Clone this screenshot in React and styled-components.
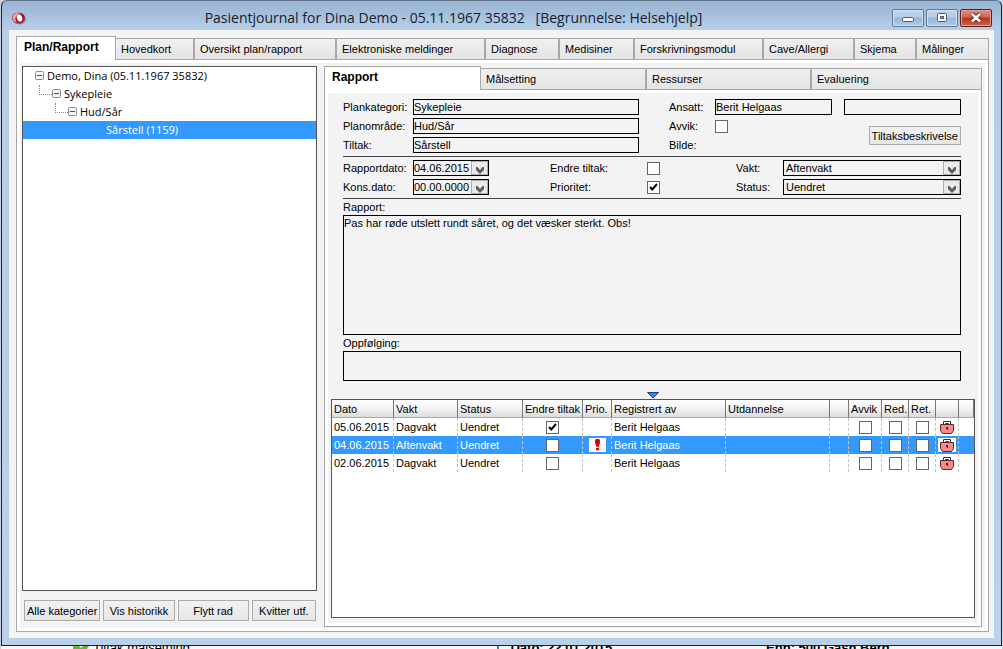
import React, { useState } from "react";
import styled, { createGlobalStyle, css } from "styled-components";

const mainTabs = [
  "Plan/Rapport",
  "Hovedkort",
  "Oversikt plan/rapport",
  "Elektroniske meldinger",
  "Diagnose",
  "Medisiner",
  "Forskrivningsmodul",
  "Cave/Allergi",
  "Skjema",
  "Målinger",
];

const subTabs = ["Rapport", "Målsetting", "Ressurser", "Evaluering"];

const reports = [
  { id: 1, date: "05.06.2015", shift: "Dagvakt", status: "Uendret", changed: true, prio: false, by: "Berit Helgaas" },
  { id: 2, date: "04.06.2015", shift: "Aftenvakt", status: "Uendret", changed: false, prio: true, by: "Berit Helgaas" },
  { id: 3, date: "02.06.2015", shift: "Dagvakt", status: "Uendret", changed: false, prio: false, by: "Berit Helgaas" },
];

const columns = [
  { id: "date", title: "Dato", width: 62 },
  { id: "shift", title: "Vakt", width: 64 },
  { id: "status", title: "Status", width: 65 },
  { id: "changed", title: "Endre tiltak", width: 60 },
  { id: "prio", title: "Prio.", width: 29 },
  { id: "by", title: "Registrert av", width: 114 },
  { id: "education", title: "Utdannelse", width: 104 },
  { id: "blank", title: "", width: 19 },
  { id: "avvik", title: "Avvik", width: 33 },
  { id: "red", title: "Red.", width: 27 },
  { id: "ret", title: "Ret.", width: 27 },
  { id: "lock", title: "", width: 23 },
  { id: "end", title: "", width: 15 },
];

const AppLogo = () => (
  <svg width="16" height="16" viewBox="0 0 16 16" aria-hidden="true">
    <ellipse cx="8.5" cy="9.5" rx="6.5" ry="5" fill="#8d8f9c" />
    <ellipse cx="7.5" cy="8" rx="6.5" ry="5.5" fill="#a8142a" />
    <path d="M1.5 8C1.5 4 6 2 10 3C7 3.5 5 5 4.5 8C4.3 10 5 12 6.5 13C3.5 12.5 1.5 10.5 1.5 8Z" fill="#dba9b0" />
    <ellipse cx="8.5" cy="8" rx="2.6" ry="3.8" fill="#fff" transform="rotate(-20 8.5 8)" />
  </svg>
);

const Expander = () => (
  <svg width="9" height="9" viewBox="0 0 9 9" aria-hidden="true">
    <rect x="0.5" y="0.5" width="8" height="8" rx="1" fill="#f4f4f4" stroke="#8c8c8c" />
    <path d="M2 4.5H7" stroke="#3d4f8c" />
  </svg>
);

const Chevron = () => (
  <svg width="8" height="7" viewBox="0 0 8 7" aria-hidden="true">
    <path d="M0 0H1.5L4 3L6.5 0H8V3L4 7L0 3Z" fill="#5c5c5c" />
  </svg>
);

const Tick = () => (
  <svg width="9" height="8" viewBox="0 0 9 8" aria-hidden="true">
    <path d="M1 4L3.3 6.5L8 1" fill="none" stroke="#000" strokeWidth="2" />
  </svg>
);

const Lock = () => (
  <svg width="18" height="14" viewBox="0 0 18 14" aria-hidden="true">
    <path d="M5.5 4V1.5H12.5V4" fill="none" stroke="#3c3030" />
    <path d="M7.5 4V3.5H10.5V4" fill="none" stroke="#3c3030" />
    <path d="M2.5 4.5H15.5V10.5L13.5 13.5H4.5L2.5 10.5Z" fill="#f48a8a" stroke="#5a2a2c" />
    <path d="M8 7H10V10H9V9H8Z" fill="#7c1018" />
  </svg>
);

const Important = () => (
  <svg width="17" height="14" viewBox="0 0 17 14" role="img" aria-label="Prioritet">
    <rect width="17" height="14" fill="#fff" />
    <path d="M7 1H10L11 2V5L9.5 9H7.5L6 5V2Z" fill="#e8000c" />
    <path d="M7 10H10V11.5L9.5 12.5H7.5L7 11.5Z" fill="#e8000c" />
  </svg>
);

const CheckBox = ({ label, ...rest }) => (
  <CheckWrap>
    <input type="checkbox" aria-label={label} {...rest} />
    <Tick />
  </CheckWrap>
);

const DropDown = ({ id, options, date }) => (
  <DropWrap $date={date}>
    <select id={id}>
      {options.map((option) => (
        <option key={option}>{option}</option>
      ))}
    </select>
    <span>
      <Chevron />
    </span>
  </DropWrap>
);

const ReportTable = () => {
  const [selected, setSelected] = useState(2);

  return (
    <TableBox>
      <Table>
        <colgroup>
          {columns.map((col) => (
            <col key={col.id} style={{ width: col.width }} />
          ))}
        </colgroup>
        <thead>
          <tr>
            {columns.map((col) => (
              <th key={col.id}>{col.title}</th>
            ))}
          </tr>
        </thead>
        <tbody>
          {reports.map((report) => {
            const { id, date, shift, status, changed, prio, by } = report;
            return (
              <Row key={id} $selected={selected === id} onClick={() => setSelected(id)}>
                <td>{date}</td>
                <td>{shift}</td>
                <td>{status}</td>
                <IconCell>
                  <CheckBox label="Endre tiltak" defaultChecked={changed} />
                </IconCell>
                <IconCell>{prio && <Important />}</IconCell>
                <td>{by}</td>
                <td></td>
                <td></td>
                <IconCell>
                  <CheckBox label="Avvik" />
                </IconCell>
                <IconCell>
                  <CheckBox label="Red." />
                </IconCell>
                <IconCell>
                  <CheckBox label="Ret." />
                </IconCell>
                <IconCell>
                  <LockBox>
                    <Lock />
                  </LockBox>
                </IconCell>
                <td></td>
              </Row>
            );
          })}
        </tbody>
      </Table>
    </TableBox>
  );
};

const ReportForm = () => (
  <Form>
    <TopFields>
      <FieldGrid $cols="70px 1fr">
        <label htmlFor="kategori">Plankategori:</label>
        <Input id="kategori" defaultValue="Sykepleie" />
        <label htmlFor="omrade">Planområde:</label>
        <Input id="omrade" defaultValue="Hud/Sår" />
        <label htmlFor="tiltak">Tiltak:</label>
        <Input id="tiltak" defaultValue="Sårstell" />
      </FieldGrid>
      <FieldGrid $cols="46px 1fr auto">
        <label htmlFor="ansatt">Ansatt:</label>
        <Pair>
          <Input id="ansatt" defaultValue="Berit Helgaas" />
          <Input aria-label="Ansatt 2" />
        </Pair>
        <label htmlFor="avvik">Avvik:</label>
        <CheckBox id="avvik" />
        <DescriptionButton type="button">Tiltaksbeskrivelse</DescriptionButton>
        <span>Bilde:</span>
      </FieldGrid>
    </TopFields>
    <MiddleFields>
      <FieldGrid $cols="70px 76px">
        <label htmlFor="rapportdato">Rapportdato:</label>
        <DropDown id="rapportdato" date options={["04.06.2015"]} />
        <label htmlFor="konsdato">Kons.dato:</label>
        <DropDown id="konsdato" date options={["00.00.0000"]} />
      </FieldGrid>
      <FieldGrid $cols="97px 13px">
        <label htmlFor="endre">Endre tiltak:</label>
        <CheckBox id="endre" />
        <label htmlFor="prioritet">Prioritet:</label>
        <CheckBox id="prioritet" defaultChecked />
      </FieldGrid>
      <FieldGrid $cols="47px 1fr">
        <label htmlFor="vakt">Vakt:</label>
        <DropDown id="vakt" options={["Aftenvakt", "Dagvakt"]} />
        <label htmlFor="status">Status:</label>
        <DropDown id="status" options={["Uendret"]} />
      </FieldGrid>
    </MiddleFields>
    <label htmlFor="rapport">Rapport:</label>
    <TextArea
      id="rapport"
      $height={120}
      defaultValue="Pas har røde utslett rundt såret, og det væsker sterkt. Obs!"
    />
    <label htmlFor="oppfolging">Oppfølging:</label>
    <TextArea id="oppfolging" $height={30} />
  </Form>
);

const App = () => {
  const [mainTab, setMainTab] = useState(mainTabs[0]);
  const [subTab, setSubTab] = useState(subTabs[0]);

  return (
    <Desktop>
      <GlobalStyle />
      <Window>
        <TitleBar>
          <AppLogo />
          <h1>Pasientjournal for Dina Demo - 05.11.1967 35832 &nbsp; [Begrunnelse: Helsehjelp]</h1>
          <WindowButtons>
            <WindowButton type="button" aria-label="Minimer">
              <svg width="12" height="12" viewBox="0 0 12 12">
                <rect x="0.5" y="5.5" width="11" height="4" rx="1" fill="#fff" stroke="#4e5a6c" />
              </svg>
            </WindowButton>
            <WindowButton type="button" aria-label="Maksimer">
              <svg width="12" height="12" viewBox="0 0 12 12">
                <rect x="1.5" y="1.5" width="9" height="8" rx="1" fill="#fff" stroke="#4e5a6c" />
                <rect x="4.5" y="4.5" width="3" height="2" fill="#8fb0d6" stroke="#4e5a6c" />
              </svg>
            </WindowButton>
            <WindowButton type="button" aria-label="Lukk" $close>
              <svg width="14" height="12" viewBox="0 0 14 12">
                <path d="M3 2L11 9.5M11 2L3 9.5" stroke="#5c2a2a" strokeWidth="4.5" />
                <path d="M3 2L11 9.5M11 2L3 9.5" stroke="#fff" strokeWidth="2.6" />
              </svg>
            </WindowButton>
          </WindowButtons>
        </TitleBar>
        <Body>
          <TabList role="tablist" $cols="100fr 79fr 142fr 149fr 74fr 75fr 129fr 91fr 62fr 72fr">
            {mainTabs.map((tab) => (
              <Tab
                key={tab}
                type="button"
                role="tab"
                aria-selected={tab === mainTab}
                $active={tab === mainTab}
                onClick={() => setMainTab(tab)}
              >
                {tab}
              </Tab>
            ))}
          </TabList>
          <Panel>
            <MainPage>
              <Side>
                <Tree>
                  <TreeItem type="button" $level={0}>
                    <Expander />
                    Demo, Dina (05.11.1967 35832)
                  </TreeItem>
                  <TreeItem type="button" $level={1}>
                    <Branch />
                    <Expander />
                    Sykepleie
                  </TreeItem>
                  <TreeItem type="button" $level={2}>
                    <Branch />
                    <Expander />
                    Hud/Sår
                  </TreeItem>
                  <TreeItem type="button" $level={3} $selected>
                    <Branch $leaf />
                    Sårstell (1159)
                  </TreeItem>
                </Tree>
                <SideButtons>
                  <Button type="button">Alle kategorier</Button>
                  <Button type="button">Vis historikk</Button>
                  <Button type="button">Flytt rad</Button>
                  <Button type="button">Kvitter utf.</Button>
                </SideButtons>
              </Side>
              <Main>
                <TabList role="tablist" $cols="157fr 166fr 165fr 170fr">
                  {subTabs.map((tab) => (
                    <Tab
                      key={tab}
                      type="button"
                      role="tab"
                      aria-selected={tab === subTab}
                      $active={tab === subTab}
                      onClick={() => setSubTab(tab)}
                    >
                      {tab}
                    </Tab>
                  ))}
                </TabList>
                <Panel>
                  <ReportPage>
                    <ReportForm />
                    <Splitter>
                      <svg width="12" height="7" viewBox="0 0 12 7" aria-hidden="true">
                        <path d="M0.5 0.5H11.5L6 6Z" fill="#3c86d8" stroke="#173f86" />
                      </svg>
                    </Splitter>
                    <ReportTable />
                  </ReportPage>
                </Panel>
              </Main>
            </MainPage>
          </Panel>
        </Body>
      </Window>
      <Behind aria-hidden="true">
        <svg width="16" height="3" viewBox="0 0 16 3">
          <path d="M0 0H6L8 2L10 0H16L14 3H0Z" fill="#6fb42c" />
        </svg>
        <span>Tiltak målsetning</span>
        <BehindPane>
          <b>Dato: 22.01.2015</b>
        </BehindPane>
        <b>Enh: 500 Gash Berg</b>
      </Behind>
    </Desktop>
  );
};

const GlobalStyle = createGlobalStyle`
  * {
    box-sizing: border-box;
  }

  body {
    margin: 0;
    font-family: "Liberation Sans", Arial, sans-serif;
    font-size: 11px;
    color: #000;
  }

  button, input, select, textarea {
    margin: 0;
    font: inherit;
    color: inherit;
    border-radius: 0;
  }
`;

const Desktop = styled.div`
  min-height: 100vh;
  display: flex;
  flex-direction: column;
  padding: 0 1px;
  background: #c9d2dc;
`;

const Window = styled.div`
  flex: 1;
  display: flex;
  flex-direction: column;
  padding: 0 7px 7px;
  border: 1px solid #16242c;
  border-top-color: #5e7186;
  border-radius: 6px 6px 0 0;
  background: linear-gradient(#98b4d2, #b5cde7 28px, #b9d1ea);
`;

const TitleBar = styled.header`
  height: 29px;
  display: grid;
  grid-template-columns: 16px 1fr 112px;
  align-items: center;
  padding: 4px 2px 0;

  h1 {
    margin: 0;
    text-align: center;
    white-space: nowrap;
    font-family: "Open Sans", "Noto Sans", sans-serif;
    font-size: 14px;
    font-weight: 400;
    line-height: 20px;
    color: #16202e;
  }
`;

const WindowButtons = styled.div`
  display: flex;
  justify-content: flex-end;
  gap: 2px;
`;

const WindowButton = styled.button`
  width: 32px;
  height: 18px;
  display: flex;
  align-items: center;
  justify-content: center;
  padding: 0;
  border: 1px solid ${({ $close }) => ($close ? "#5a1f22" : "#5f7896")};
  border-radius: 2px;
  box-shadow: inset 0 0 0 1px ${({ $close }) => ($close ? "#e2a294" : "#d3e2f2")};
  background: ${({ $close }) =>
    $close
      ? "linear-gradient(#e0907e, #d0664e 45%, #b8321c 50%, #d06448)"
      : "linear-gradient(#c2d6ec, #b3cae5 45%, #98b6d8 50%, #b0cae6)"};
`;

const Body = styled.main`
  flex: 1;
  display: flex;
  flex-direction: column;
  padding: 6px 5px 6px 7px;
  background: #f4f4f4;
`;

const TabList = styled.div`
  display: grid;
  grid-template-columns: ${({ $cols }) => $cols};
  align-items: end;
`;

const Tab = styled.button`
  height: 22px;
  min-width: 0;
  padding: 0 5px;
  border: 1px solid #a8a8a8;
  border-left: 0;
  border-right-width: 2px;
  background: linear-gradient(#f0f0f0, #e4e4e4);
  text-align: left;
  white-space: nowrap;

  &:last-child {
    border-right-width: 1px;
  }

  ${({ $active }) =>
    $active &&
    css`
      height: 24px;
      padding: 0 7px 3px;
      border-left: 1px solid #a8a8a8;
      border-right-width: 1px;
      border-bottom: 0;
      background: #fff;
      font-size: 12px;
      font-weight: 700;
    `}
`;

const Panel = styled.div`
  flex: 1;
  display: flex;
  flex-direction: column;
  padding: 3px;
  border: 1px solid #a8a8a8;
  border-top: 0;
  background: #fff;
`;

const MainPage = styled.div`
  flex: 1;
  display: grid;
  grid-template-columns: 295fr 658fr;
  gap: 7px;
  padding: 3px 3px 1px 2px;
  background: #f3f3f3;
`;

const Side = styled.div`
  display: flex;
  flex-direction: column;
  padding-bottom: 6px;
`;

const Tree = styled.div`
  flex: 1;
  border: 1px solid #555;
  background: #fff;
  font-family: "Open Sans", Tahoma, sans-serif;
`;

const TreeItem = styled.button`
  width: 100%;
  height: 18px;
  display: flex;
  align-items: center;
  gap: 3px;
  padding: 0 0 1px ${({ $level }) => ($level ? $level * 16 : 12)}px;
  border: 0;
  background: ${({ $selected }) => ($selected ? "#3399ff" : "#fff")};
  color: ${({ $selected }) => ($selected ? "#fff" : "#000")};
  text-align: left;
  white-space: nowrap;
`;

const Branch = styled.span`
  width: ${({ $leaf }) => ($leaf ? 35 : 13)}px;
  height: 10px;
  align-self: flex-start;
  margin-right: -3px;
  border: 1px dotted ${({ $leaf }) => ($leaf ? "#4a90dc" : "#8a8a8a")};
  border-top: 0;
  border-right: 0;
`;

const Main = styled.div`
  min-width: 0;
  display: flex;
  flex-direction: column;
`;

const ReportPage = styled.div`
  flex: 1;
  display: flex;
  flex-direction: column;
  padding: 6px 3px 5px;
  background: #f3f3f3;
`;

const Button = styled.button`
  height: 21px;
  padding: 0 2px;
  border: 1px solid #acacac;
  background: linear-gradient(#f2f2f2, #e6e6e6);
  white-space: nowrap;
`;

const SideButtons = styled.div`
  display: grid;
  grid-template-columns: 75fr 72fr 72fr 65fr;
  gap: 3px;
  padding: 9px 1px 0 2px;
`;

const Form = styled.form`
  display: flex;
  flex-direction: column;
  padding: 0 14px 0 12px;
  line-height: 16px;
`;

const TopFields = styled.div`
  display: grid;
  grid-template-columns: 296fr 292fr;
  gap: 30px;
  padding-bottom: 3px;
`;

const MiddleFields = styled.div`
  display: grid;
  grid-template-columns: 207fr 186fr 225fr;
  padding: 3px 0;
  border: 1px solid #444;
  border-left: 0;
  border-right: 0;
`;

const FieldGrid = styled.div`
  display: grid;
  grid-template-columns: ${({ $cols }) => $cols};
  grid-auto-rows: 16px;
  row-gap: 3px;
  align-items: center;
`;

const Pair = styled.div`
  grid-column: 2 / -1;
  display: grid;
  grid-template-columns: 1fr 1fr;
  gap: 12px;
`;

const Input = styled.input`
  width: 100%;
  min-width: 0;
  height: 16px;
  padding: 0;
  border: 1px solid #000;
  background: #f3f3f3;
`;

const TextArea = styled.textarea`
  height: ${({ $height }) => $height}px;
  padding: 0;
  border: 1px solid #000;
  background: #f3f3f3;
  line-height: 14px;
  resize: none;
`;

const DescriptionButton = styled(Button)`
  grid-column: 3;
  grid-row: 2 / 4;
  height: 19px;
`;

const DropWrap = styled.div`
  display: grid;
  grid-template-columns: 1fr 17px;
  height: 16px;
  border: 1px solid #000;

  select {
    grid-column: 1 / 3;
    grid-row: 1;
    min-width: 0;
    height: 14px;
    appearance: none;
    padding: 0 ${({ $date }) => ($date ? 0 : 2)}px;
    border: 0;
    background: #f3f3f3;
    line-height: 14px;
  }

  span {
    grid-column: 2;
    grid-row: 1;
    z-index: 1;
    display: flex;
    align-items: end;
    justify-content: center;
    border: 1px solid #acacac;
    background: #e9e9e9;
    pointer-events: none;
  }
`;

const CheckWrap = styled.span`
  width: 13px;
  height: 13px;
  display: inline-grid;
  place-items: center;
  vertical-align: middle;

  input {
    grid-area: 1 / 1;
    width: 13px;
    height: 13px;
    appearance: none;
    border: 1px solid #666;
    background: #fff;
  }

  svg {
    grid-area: 1 / 1;
    visibility: hidden;
    pointer-events: none;
  }

  input:checked + svg {
    visibility: visible;
  }
`;

const Splitter = styled.div`
  height: 18px;
  display: flex;
  align-items: end;
  justify-content: center;
`;

const TableBox = styled.div`
  flex: 1;
  border: 1px solid #555;
  background: #fff;
`;

const Table = styled.table`
  width: 100%;
  table-layout: fixed;
  border-collapse: separate;
  border-spacing: 0;

  th,
  td {
    height: 18px;
    padding: 0 2px;
    line-height: 16px;
    font-weight: 400;
    text-align: left;
    white-space: nowrap;
  }

  th {
    border-right: 1px solid #777;
    border-bottom: 1px solid #aaa;
    background: linear-gradient(#fff, #f2f2f2 50%, #dcdcdc);
  }

  td {
    border-right: 1px dashed #c4c4c4;
  }

  td:last-child {
    border-right: 0;
  }
`;

const Row = styled.tr`
  background: ${({ $selected }) => ($selected ? "#3399ff" : "#fff")};
  color: ${({ $selected }) => ($selected ? "#fff" : "#000")};
`;

const IconCell = styled.td`
  && {
    padding: 0;
    text-align: center;
    line-height: 0;
  }

  svg {
    vertical-align: middle;
  }
`;

const LockBox = styled.span`
  display: inline-block;
  vertical-align: middle;
  background: #fff;
`;

// Sliver of the window that lies underneath
const Behind = styled.div`
  height: 3px;
  display: grid;
  grid-template-columns: 16px 404fr 267fr 238fr;
  column-gap: 4px;
  align-items: center;
  padding-left: 72px;
  overflow: hidden;
  background: #f6f8fa;
  font-size: 13px;
  line-height: 3px;
  white-space: nowrap;
`;

const BehindPane = styled.div`
  padding-left: 11px;
  border-left: 2px solid #3f7fb8;
`;

export default App;
